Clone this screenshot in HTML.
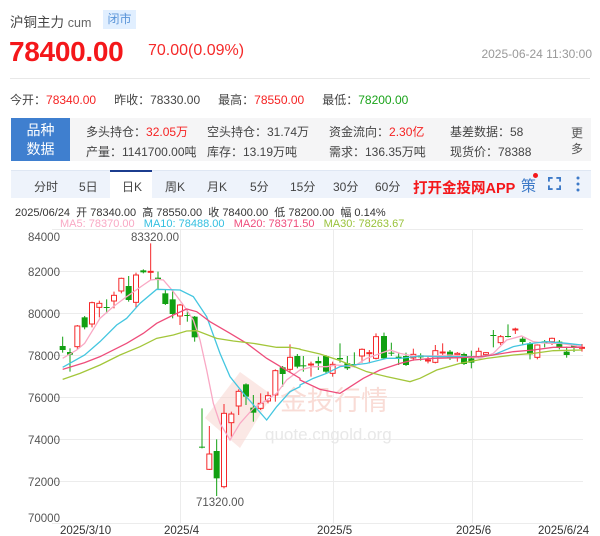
<!DOCTYPE html>
<html><head><meta charset="utf-8"><style>
*{margin:0;padding:0;box-sizing:border-box}
body{width:600px;height:536px;background:#fff;font-family:"Liberation Sans","Noto Sans CJK SC",sans-serif;position:relative;overflow:hidden;color:#333}
.a{position:absolute;white-space:nowrap}
.red{color:#f52222}.grn{color:#1aa31a}
</style></head><body>
<div class="a" style="left:10px;top:11px;font-size:13.5px;color:#444">沪铜主力 <span style="color:#666;font-size:12.5px">cum</span></div>
<div class="a" style="left:103px;top:10px;width:33px;height:19px;background:#e1efff;color:#5b95d8;font-size:12px;line-height:19px;text-align:center">闭市</div>
<div class="a" style="left:9px;top:36px;font-size:28px;font-weight:bold;color:#f4171a;letter-spacing:-0.3px">78400.00</div>
<div class="a" style="left:148px;top:42px;font-size:16px;color:#f52a2a">70.00(0.09%)</div>
<div class="a" style="right:8px;top:47px;font-size:12px;color:#999">2025-06-24 11:30:00</div>
<div class="a" style="left:10px;top:78px;width:580px;height:1px;background:#e8e8e8"></div>
<div class="a" style="left:10px;top:91px;font-size:12px;color:#444">今开：<span class="red">78340.00</span><span style="display:inline-block;width:18px"></span>昨收：78330.00<span style="display:inline-block;width:18px"></span>最高：<span class="red">78550.00</span><span style="display:inline-block;width:18px"></span>最低：<span class="grn">78200.00</span></div>
<div class="a" style="left:11px;top:118px;width:580px;height:43px;background:#f5f5f6"></div>
<div class="a" style="left:11px;top:118px;width:59px;height:43px;background:#3f7fcf;color:#fff;font-size:14px;line-height:19px;text-align:center;padding-top:3px;white-space:normal">品种<br>数据</div>
<div class="a" style="left:86px;top:122px;font-size:12px;color:#444;line-height:20px">多头持仓：<span class="red">32.05万</span><br>产量：1141700.00吨</div>
<div class="a" style="left:207px;top:122px;font-size:12px;color:#444;line-height:20px">空头持仓：31.74万<br>库存：13.19万吨</div>
<div class="a" style="left:329px;top:122px;font-size:12px;color:#444;line-height:20px">资金流向：<span class="red">2.30亿</span><br>需求：136.35万吨</div>
<div class="a" style="left:450px;top:122px;font-size:12px;color:#444;line-height:20px">基差数据：58<br>现货价：78388</div>
<div class="a" style="left:571px;top:125px;font-size:12px;color:#555;line-height:16px;white-space:normal;width:12px">更多</div>
<div class="a" style="left:11px;top:170px;width:580px;height:28px;background:#eef3fb;border-top:1px solid #dfe7f3"></div>
<div class="a" style="left:110px;top:170px;width:42px;height:28px;background:#fff;border-top:2px solid #1b3c8e"></div>
<div class="a" style="top:178px;font-size:12px;color:#444;left:0;width:600px">
<span class="a" style="left:34px">分时</span><span class="a" style="left:79px">5日</span><span class="a" style="left:122px">日K</span><span class="a" style="left:165px">周K</span><span class="a" style="left:207px">月K</span><span class="a" style="left:250px">5分</span><span class="a" style="left:290px">15分</span><span class="a" style="left:333px">30分</span><span class="a" style="left:375px">60分</span></div>
<div class="a" style="left:413px;top:177px;font-size:14.5px;font-weight:bold;color:#f4171a">打开金投网APP</div>
<div class="a" style="left:521px;top:175px;font-size:15px;color:#3d7ac8">策</div>
<div class="a" style="left:533px;top:173px;width:5px;height:5px;border-radius:50%;background:#f4171a"></div>
<svg class="a" style="left:548px;top:177px" width="13" height="13" viewBox="0 0 14 14" fill="none" stroke="#3d7ac8" stroke-width="2"><path d="M1 5V1h4M9 1h4v4M13 9v4H9M5 13H1V9"/></svg>
<svg class="a" style="left:576px;top:176px" width="4" height="16"><circle cx="2" cy="2" r="1.5" fill="#3d7ac8"/><circle cx="2" cy="8" r="1.5" fill="#3d7ac8"/><circle cx="2" cy="14" r="1.5" fill="#3d7ac8"/></svg>
<div class="a" style="left:15px;top:204px;font-size:11px;color:#333">2025/06/24&nbsp; 开 78340.00&nbsp; 高 78550.00&nbsp; 收 78400.00&nbsp; 低 78200.00&nbsp; 幅 0.14%</div>
<div class="a" style="left:60px;top:218px;font-size:11px"><span style="color:#f9a8c4">MA5: 78370.00</span>&nbsp;&nbsp; <span style="color:#33bfe0">MA10: 78488.00</span>&nbsp;&nbsp; <span style="color:#ef4d7c">MA20: 78371.50</span>&nbsp;&nbsp; <span style="color:#99c23a">MA30: 78263.67</span></div>
<svg id="ch" class="a" style="left:0;top:0" width="600" height="536">
<g stroke="#ececec" stroke-width="1">
<line x1="52" x2="583" y1="229.5" y2="229.5"/><line x1="52" x2="583" y1="271.5" y2="271.5"/><line x1="52" x2="583" y1="313.5" y2="313.5"/><line x1="52" x2="583" y1="355.5" y2="355.5"/><line x1="52" x2="583" y1="397.5" y2="397.5"/><line x1="52" x2="583" y1="439.5" y2="439.5"/><line x1="52" x2="583" y1="481.5" y2="481.5"/><line x1="52" x2="583" y1="523.5" y2="523.5"/>
<line x1="180.5" x2="180.5" y1="229" y2="523"/><line x1="333.5" x2="333.5" y1="229" y2="523"/><line x1="472.5" x2="472.5" y1="229" y2="523"/>
</g>
<g opacity="0.5"><path d="M240 372 L272 395 L240 448 L205 418Z" fill="#f7d2cc"/></g>
<text x="280" y="410" font-size="27" fill="#f9dcd6" font-family="Noto Sans CJK SC,sans-serif">金投行情</text>
<text x="265" y="440" font-size="17" fill="#e8e8e8" font-family="Liberation Sans,sans-serif">quote.cngold.org</text>
<g font-size="11.5" fill="#555" font-family="Liberation Sans,sans-serif">
<text x="28" y="241">84000</text><text x="28" y="276">82000</text><text x="28" y="318">80000</text><text x="28" y="360">78000</text><text x="28" y="402">76000</text><text x="28" y="444">74000</text><text x="28" y="486">72000</text><text x="28" y="522">70000</text>
<text x="131" y="241">83320.00</text><text x="196" y="506">71320.00</text>
<text x="60" y="534" fill="#333">2025/3/10</text><text x="164" y="534" fill="#333">2025/4</text><text x="317" y="534" fill="#333">2025/5</text><text x="456" y="534" fill="#333">2025/6</text><text x="538" y="534" fill="#333">2025/6/24</text>
</g>
<g id="cd"></g><g id="ml" fill="none" stroke-width="1.3"></g>
</svg>
<script>
var L=[[188,'g',348,360,320,368],[210,'g',366,374,355,425],[232,'r',288,350,285,358],[254,'g',262,292,258,298],[276,'r',218,282,215,292],[298,'r',220,232,212,262],[320,'g',231,233,208,250],[342,'r',196,213,185,235],[364,'r',145,183,143,190],[386,'g',168,210,138,215],[408,'r',135,217,128,235],[430,'g',121,127,118,130],[452,'r',124,126,40,150],[474,'g',143,150,125,178],[496,'g',190,222,180,225],[518,'g',208,252,180,265],[540,'r',225,258,222,285],[562,'g',255,257,240,275],[584,'g',260,322,258,335],[606,'g',650,652,535,655],[628,'r',672,718,588,720],[650,'g',663,745,628,798],[672,'r',550,770,522,775],[694,'r',552,578,545,620],[716,'r',484,528,478,555],[738,'g',463,500,460,525],[760,'g',533,548,495,575],[782,'r',520,535,490,540],[804,'r',497,513,485,520],[826,'r',422,495,418,515],[848,'g',412,432,408,470],[870,'r',382,418,343,425],[892,'g',378,410,372,415]];
var R=[[10,'g',406,408,378,425],[33,'r',402,405,395,440],[55,'g',393,400,380,420],[78,'g',378,425,375,430],[98,'r',403,430,395,440],[120,'g',384,388,340,398],[142,'g',400,415,378,420],[163,'g',402,405,367,412],[186,'r',358,378,355,398],[208,'r',368,370,360,400],[228,'r',320,385,310,388],[252,'g',318,385,308,388],[274,'g',368,370,338,378],[296,'g',380,385,370,405],[318,'g',378,405,368,408],[340,'r',373,384,356,392],[362,'g',376,382,370,392],[384,'r',390,393,380,400],[406,'r',362,397,345,400],[428,'r',366,368,340,375],[450,'g',365,385,360,390],[472,'r',370,374,366,395],[492,'g',372,402,368,405],[514,'g',385,398,362,415],[536,'r',364,380,353,384],[558,'r',368,374,366,380],[580,'g',315,317,300,352],[602,'r',320,338,315,345],[624,'g',318,320,283,322],[646,'r',297,300,293,312],[668,'g',326,336,320,345],[690,'g',340,373,336,388],[712,'r',345,382,343,388],[734,'g',334,340,330,352],[756,'r',325,335,323,345],[778,'g',335,353,330,358],[800,'g',365,375,350,383],[822,'g',346,352,343,366],[846,'r',352,355,342,365]];
var s='';
function c(a,ox){var x=ox+a[0]/3,t=230+a[2]/3,b=230+a[3]/3,h=230+a[4]/3,l=230+a[5]/3;var col=a[1]=='r'?'#f5282a':'#11a011';
s+='<line x1="'+x+'" x2="'+x+'" y1="'+h+'" y2="'+l+'" stroke="'+col+'"/>';
var bh=Math.max(b-t,1);
if(a[1]=='r')s+='<rect x="'+(x-2.5)+'" y="'+t+'" width="5" height="'+bh+'" fill="#fff" stroke="'+col+'"/>';
else s+='<rect x="'+(x-3)+'" y="'+t+'" width="6" height="'+bh+'" fill="'+col+'"/>';}
L.forEach(function(a){c(a,0)});R.forEach(function(a){c(a,300)});
document.getElementById('cd').innerHTML=s;
var M=[['#f9a8c4',[[188,385],[230,360],[254,340],[300,265],[340,230],[380,200],[430,165],[452,150],[470,148],[490,150],[520,185],[550,225],[580,270],[600,330],[620,420],[640,520],[660,580],[690,630],[720,580],[760,535],[800,510],[830,490],[860,450],[900,420]],[[0,420],[40,410],[80,410],[110,405],[160,410],[200,385],[270,360],[300,370],[340,378],[400,378],[450,375],[500,380],[540,385],[580,370],[620,330],[665,318],[700,335],[740,340],[780,340],[845,350]]],
['#44c6e0',[[188,412],[254,375],[300,335],[350,285],[380,265],[420,220],[470,178],[540,180],[580,200],[620,260],[660,370],[690,440],[730,490],[800,570],[830,530],[870,485],[900,470]],[[0,465],[40,445],[80,430],[120,410],[160,405],[200,400],[260,385],[300,385],[360,378],[420,380],[480,380],[540,380],[580,375],[640,350],[680,342],[740,335],[800,340],[845,345]]],
['#ee4d7b',[[188,418],[254,398],[300,380],[380,340],[430,310],[470,280],[520,255],[560,237],[590,245],[630,275],[690,310],[740,340],[800,385],[850,415],[900,445]],[[0,450],[60,478],[120,490],[190,445],[240,420],[300,400],[340,390],[400,385],[480,383],[560,378],[640,365],[700,360],[760,352],[845,352]]],
['#a3c63a',[[188,448],[240,430],[300,405],[360,375],[420,350],[470,325],[520,315],[560,303],[590,302],[650,325],[700,333],[760,340],[830,352],[870,352],[900,357]],[[0,358],[60,372],[120,392],[200,425],[260,440],[330,455],[360,445],[410,420],[480,400],[560,385],[640,375],[700,370],[760,362],[845,360]]]];
var m='';M.forEach(function(k){var p=k[1].map(function(q){return (q[0]/3)+','+(230+q[1]/3)}).concat(k[2].map(function(q){return (300+q[0]/3)+','+(230+q[1]/3)}));m+='<polyline stroke="'+k[0]+'" points="'+p.join(' ')+'"/>';});
document.getElementById('ml').innerHTML=m;
</script>
</body></html>
